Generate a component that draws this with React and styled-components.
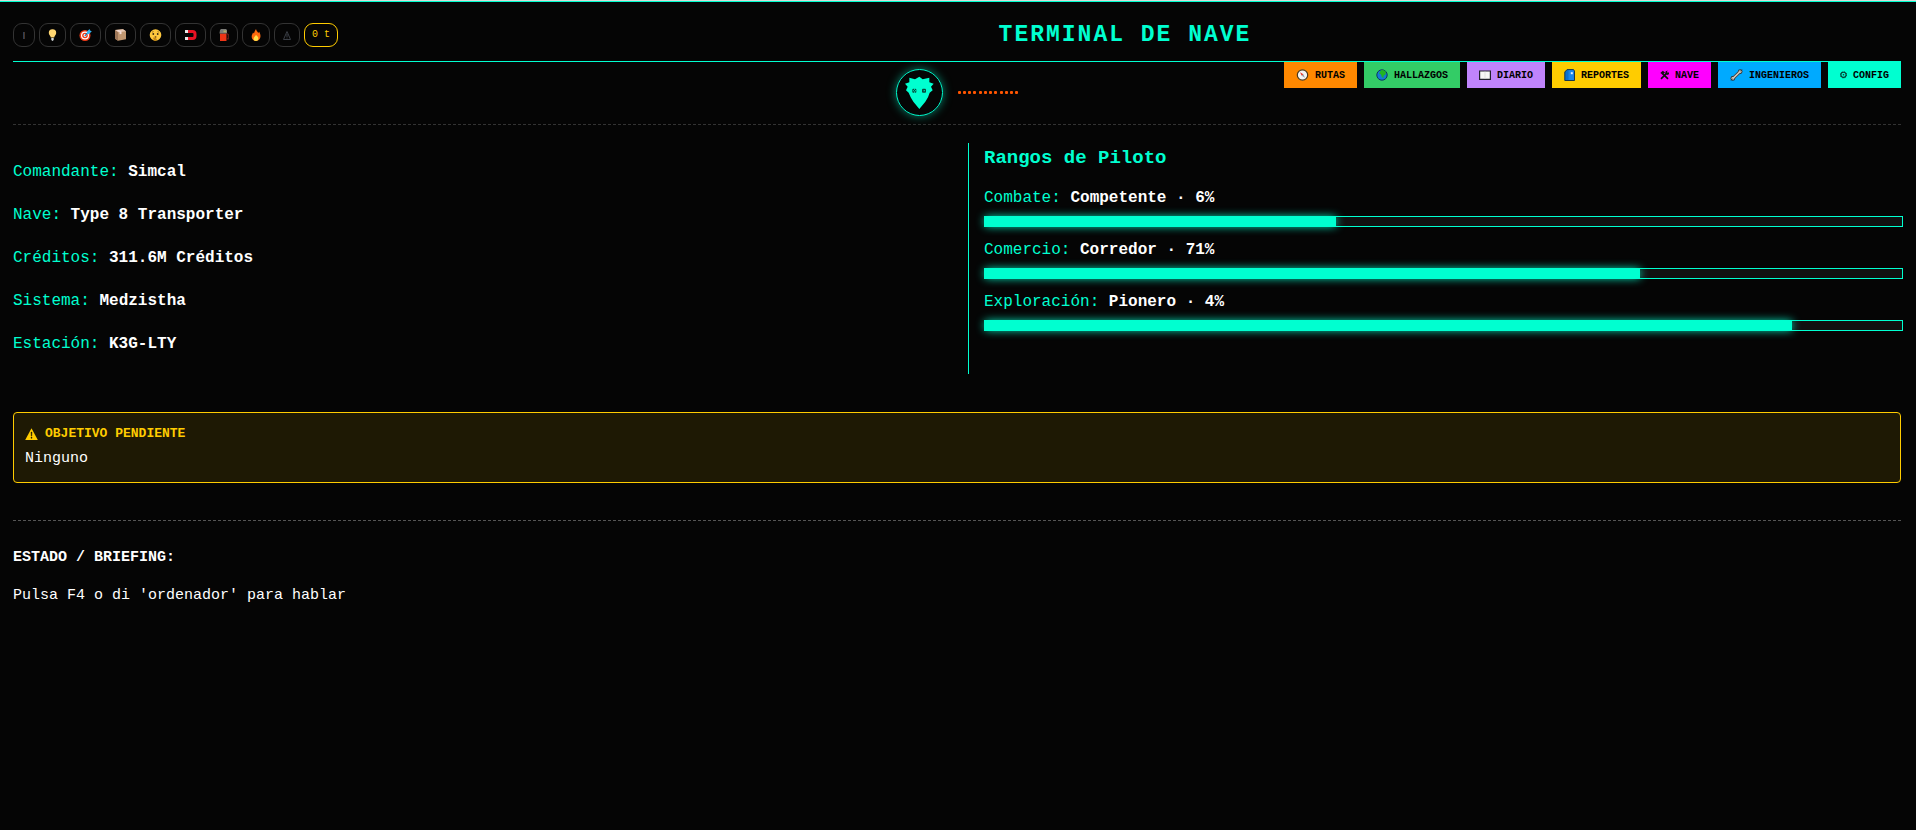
import React, { useState } from 'react'
import styled, { createGlobalStyle } from 'styled-components'

const GlobalStyle = createGlobalStyle`
  * { box-sizing: border-box; }
  body {
    margin: 0;
    min-height: 100vh;
    background: #050505;
    color: #ffffff;
    font-family: "Courier New", "Liberation Mono", monospace;
    font-size: 15px;
    line-height: 20px;
  }
`

/* ---------- icons ---------- */

const Bar = () => (
  <svg width="4" height="12" viewBox="0 0 4 12"><path d="M1.5 3v7" stroke="#2c3d55" /><path d="M2.5 3v7" stroke="#4a3524" /></svg>
)
const Bulb = () => (
  <svg width="9" height="12" viewBox="0 0 9 12">
    <path d="M4.5 .3a3.6 3.6 0 0 1 3.7 3.6c0 1.700-1.700 2.600-2 4.600h-3.400c-.3-2-2-2.900-2-4.600A3.600 3.600 0 0 1 4.500.3z" fill="#ffd671" />
    <path d="M3.300 9h2.400v2l-1.200 1-1.200-1z" fill="#d8dde0" />
  </svg>
)
const Target = () => (
  <svg width="13" height="12" viewBox="0 0 13 12">
    <circle cx="6" cy="6.500" r="5.500" fill="#f03a17" />
    <circle cx="6" cy="6.500" r="4" fill="#fff" />
    <circle cx="6" cy="6.500" r="2.800" fill="#f03a17" />
    <circle cx="6" cy="6.500" r="1.400" fill="#fff" />
    <path d="M5.800 6.800L9 3.500" stroke="#1673b8" strokeWidth="1.200" />
    <path d="M8 2.500L10.500 0l.5 1.600 1.800.6L10 5H8z" fill="#35b5f2" />
  </svg>
)
const Box = () => (
  <svg width="13" height="12" viewBox="0 0 13 12">
    <path d="M1 1L9 .3l3 2v8l-8 1.500-3-2z" fill="#c19770" />
    <path d="M1 1L9 .3l3 2-8 1z" fill="#e8c9b5" />
    <path d="M1 1l3 2.300v8.500l-3-2z" fill="#9d7658" />
    <path d="M4.500 1l3 1.500v2.500l-2 .3V3L2.700 1.300z" fill="#f3dcd6" />
  </svg>
)
const Face = () => (
  <svg width="13" height="12" viewBox="0 0 13 12">
    <circle cx="6.500" cy="6" r="5.800" fill="#ffc83d" />
    <circle cx="4.300" cy="5" r=".9" fill="#3b2a14" />
    <circle cx="8.700" cy="5" r=".9" fill="#3b2a14" />
    <path d="M3 3.200l1.600-.6M8.500 2.600l1.600.6" stroke="#7a5414" strokeWidth=".7" />
    <ellipse cx="6.500" cy="8" rx="1" ry=".8" fill="#5a3510" />
    <path d="M4 8.500l2.500.2 1.500 1.500-.8 1.600H5z" fill="#c68512" />
  </svg>
)
const Magnet = () => (
  <svg width="13" height="12" viewBox="0 0 13 12">
    <path d="M4 2.500h4.500q2.500 0 2.500 2.500v2q0 2.500-2.500 2.500H4" fill="none" stroke="#e81224" strokeWidth="3" />
    <path d="M1 1h3v3H1zM1 8h3v3H1z" fill="#e6e6e6" />
  </svg>
)
const Fuel = () => (
  <svg width="10" height="12" viewBox="0 0 10 12">
    <path d="M1 4.500h6.500V12H1z" fill="#ef3516" />
    <path d="M1 1l1-1h5l1 1v3.500H.5z" fill="#7d7d78" />
    <path d="M4.500 1.500h2.800v1.800H4.500z" fill="#b6ad67" />
    <path d="M7.500 4.500l1.800 1v4.300H7.500" fill="none" stroke="#6c1e18" strokeWidth="1.200" />
  </svg>
)
const Fire = () => (
  <svg width="10" height="12" viewBox="0 0 10 12">
    <path d="M5 0c.3 2 1.700 2.600 2.200 4l1-1.200C9.300 5 9.800 6.500 9.300 8.500 8.800 10.800 7 12 5 12S.9 10.600.7 8.300C.5 6 1.600 5 2 3.500l1 1C3.400 2.500 4.200 1.500 5 0z" fill="#ff6a0d" />
    <path d="M5 6c1.200 1.300 2.600 1.900 2.300 3.800C7.100 11.200 6.200 12 5 12s-2.300-.8-2.400-2.100C2.500 8.300 4.200 7.500 5 6z" fill="#ffe34a" />
  </svg>
)
const WarnOutline = () => (
  <svg width="8" height="12" viewBox="0 0 8 12">
    <path d="M4 2.500L.5 10.500h7z" fill="none" stroke="#3b3f46" />
    <path d="M4 5v3M4 8.500v1" stroke="#3b3f46" />
  </svg>
)
const Warn = () => (
  <svg width="13" height="12" viewBox="0 0 13 12">
    <path d="M6.500.3L12.800 12H.2z" fill="#ffcc00" />
    <path d="M6 4h1l-.2 4h-.6zM6 9h1v1.300H6z" fill="#1f1906" stroke="#1f1906" strokeWidth=".4" />
  </svg>
)
const Compass = () => (
  <svg width="13" height="12" viewBox="0 0 13 12">
    <circle cx="6.500" cy="6" r="5.200" fill="#f4f4f4" stroke="#4d3a1c" strokeWidth="1.200" />
    <path d="M4 3.200L7.300 5.300l-1.500 1.500z" fill="#e52d20" />
    <path d="M9 8.800L7.300 5.300l-1.500 1.500z" fill="#8f9aa5" />
  </svg>
)
const Globe = () => (
  <svg width="12" height="12" viewBox="0 0 12 12">
    <circle cx="6" cy="6" r="5.200" fill="#1479d6" stroke="#0d3a5e" />
    <path d="M5 1.200c2-.4 4 .3 5 2l-.6 2.500-1.700.8-.4 2.800-1.600-1.500L5 5.500 3 4.600z" fill="#22b422" />
  </svg>
)
const Book = () => (
  <svg width="12" height="12" viewBox="0 0 12 12">
    <path d="M.6 2h10.800v8.300H.6z" fill="#f7f7f7" stroke="#22222e" strokeWidth="1.200" />
    <path d="M6 2.600v7" stroke="#dcdcdc" strokeWidth=".8" />
  </svg>
)
const Report = () => (
  <svg width="11" height="12" viewBox="0 0 11 12">
    <path d="M.8 11.500V3L3 .6h6.500l1 1.500v9.400z" fill="#0b71cf" stroke="#17364d" />
    <path d="M4.500 1.300h4.700l.7 1V11H4.500z" fill="#1c86e8" />
    <path d="M6.800 3.200h2v2h-2z" fill="#e7f1fb" />
  </svg>
)
const Tools = () => (
  <svg width="9" height="12" viewBox="0 0 9 12">
    <path d="M1 9.800L7 4M2.300 4.300L8 9.800" stroke="#111" strokeWidth="1.700" />
    <path d="M.3 4l2.500-2.200L5 3.500 2.500 5.500zM5.200 4.500l.5-2.300 2-.7-.8 1.700 1.600.6.500-1v2.400L7 6z" fill="#111" />
  </svg>
)
const Wrench = () => (
  <svg width="13" height="12" viewBox="0 0 13 12">
    <path d="M3 9.300L9.800 2.800" stroke="#34312e" strokeWidth="3" />
    <circle cx="2.800" cy="9.400" r="2.300" fill="#34312e" />
    <circle cx="10.200" cy="2.600" r="2.300" fill="#34312e" />
    <path d="M3 9.300L9.800 2.800" stroke="#cfc8bd" strokeWidth="1.600" />
    <circle cx="2.800" cy="9.400" r="1.400" fill="#cfc8bd" />
    <circle cx="10.200" cy="2.600" r="1.400" fill="#cfc8bd" />
    <path d="M1 11.300l1.500-1.600M10.500 2.300L12 .7" stroke="#34312e" strokeWidth=".9" />
  </svg>
)
const Gear = () => (
  <svg width="7" height="12" viewBox="0 0 7 12">
    <circle cx="3.500" cy="5.800" r="2.600" fill="none" stroke="#053d33" strokeWidth="1.100" />
    <circle cx="3.500" cy="5.800" r="3.100" fill="none" stroke="#053d33" strokeDasharray="1.100 1.330" />
    <circle cx="3.500" cy="5.800" r=".8" fill="#053d33" />
  </svg>
)

const Avatar = () => (
  <svg width="45" height="45" viewBox="51 210 135 135">
    <path
      d="M118 230l10 8 20-5v14l13 4-8 9 5 11-9 7-5 14-8 13-18 22-18-22-8-13-6-14-8-7 5-11-8-9 13-4v-14l17 5z"
      fill="#00ffd0"
    />
    <g fill="#06483c">
      <rect x="97" y="266" width="12" height="12" rx="3" />
      <rect x="126" y="266" width="12" height="12" rx="3" />
    </g>
    <g fill="#00ffd0">
      <path d="M102 265h2v5h-2zM102 274h2v5h-2zM131 270h3v4h-3z" />
      <path d="M99 270h2v4h-2zM105 270h2v4h-2z" />
    </g>
  </svg>
)

/* ---------- data ---------- */

const alerts = [
  { name: 'Estado', icon: <Bar /> },
  { name: 'Luces', icon: <Bulb /> },
  { name: 'Armas', icon: <Target /> },
  { name: 'Carga', icon: <Box /> },
  { name: 'Silencio', icon: <Face /> },
  { name: 'Interdicción', icon: <Magnet /> },
  { name: 'Combustible', icon: <Fuel /> },
  { name: 'Calor', icon: <Fire /> },
  { name: 'Peligro', icon: <WarnOutline /> },
]

const sections = [
  { label: 'RUTAS', color: '#ff8800', icon: <Compass /> },
  { label: 'HALLAZGOS', color: '#33cc66', icon: <Globe /> },
  { label: 'DIARIO', color: '#c084fc', icon: <Book /> },
  { label: 'REPORTES', color: '#ffcc00', icon: <Report /> },
  { label: 'NAVE', color: '#ff00ff', icon: <Tools /> },
  { label: 'INGENIEROS', color: '#00aaff', icon: <Wrench /> },
  { label: 'CONFIG', color: '#00ffd0', icon: <Gear /> },
]

const pilot = [
  ['Comandante', 'Simcal'],
  ['Nave', 'Type 8 Transporter'],
  ['Créditos', '311.6M Créditos'],
  ['Sistema', 'Medzistha'],
  ['Estación', 'K3G-LTY'],
]

const ranks = [
  { name: 'Combate', rank: 'Competente', percent: 6, fill: 38.3 },
  { name: 'Comercio', rank: 'Corredor', percent: 71, fill: 71.4 },
  { name: 'Exploración', rank: 'Pionero', percent: 4, fill: 88 },
]

export default function App() {
  const [section, setSection] = useState('')

  return (
    <>
      <GlobalStyle />
      <Page>
        <Header>
          <Chips>
            {alerts.map((a) => (
              <Chip key={a.name} aria-label={a.name}>{a.icon}</Chip>
            ))}
            <Chip $active>0 t</Chip>
          </Chips>
          <Title>TERMINAL DE NAVE</Title>
        </Header>

        <Toolbar>
          <Voice>
            <AvatarRing><Avatar /></AvatarRing>
            <Wave>
              {[0, 1, 2].map((g) => (
                <WaveGroup key={g}><Dot /><Dot /><Dot /><Dot /></WaveGroup>
              ))}
            </Wave>
          </Voice>
          <Nav>
            {sections.map((s) => (
              <NavButton
                key={s.label}
                type="button"
                $color={s.color}
                aria-pressed={section === s.label}
                onClick={() => setSection(s.label)}
              >
                {s.icon}{s.label}
              </NavButton>
            ))}
          </Nav>
        </Toolbar>

        <Columns>
          <PilotInfo>
            {pilot.map(([label, value]) => (
              <InfoLine key={label}>{label}: <strong>{value}</strong></InfoLine>
            ))}
          </PilotInfo>
          <Ranks>
            <RanksTitle>Rangos de Piloto</RanksTitle>
            {ranks.map((r) => (
              <Rank key={r.name}>
                <RankText>{r.name}: <strong>{r.rank} · {r.percent}%</strong></RankText>
                <Track><Fill style={{ width: `${r.fill}%` }} /></Track>
              </Rank>
            ))}
          </Ranks>
        </Columns>

        <Objective>
          <ObjectiveTitle><Warn />OBJETIVO PENDIENTE</ObjectiveTitle>
          <Text>Ninguno</Text>
        </Objective>

        <Briefing>
          <BriefingTitle>ESTADO / BRIEFING:</BriefingTitle>
          <Text>Pulsa F4 o di 'ordenador' para hablar</Text>
        </Briefing>
      </Page>
    </>
  )
}

const Page = styled.main`
  min-height: 100vh;
  padding: 0 15px 24px 13px;
  border-top: 1px solid #d5ded9;
  box-shadow: inset 0 1px 0 #00ffd0;
`
const Header = styled.header`
  display: flex;
  align-items: center;
  gap: 11px;
  height: 61px;
  padding-top: 8px;
  border-bottom: 1px solid #00ffd0;
`
const Chips = styled.div`
  display: flex;
  gap: 4px;
`
const Chip = styled.span`
  display: flex;
  align-items: center;
  justify-content: center;
  height: 24px;
  padding: 0 ${(p) => (p.$active ? 7 : 8)}px;
  border: 1px solid ${(p) => (p.$active ? '#ffcc00' : '#333333')};
  border-radius: 9px;
  color: #ffcc00;
  font-size: 10px;
`
const Title = styled.h1`
  flex: 1;
  margin: 0;
  text-align: center;
  color: #00ffd0;
  font-size: 23px;
  line-height: 28px;
  letter-spacing: 2px;
`
const Toolbar = styled.div`
  display: grid;
  grid-template-columns: 1fr auto 1fr;
  border-bottom: 1px dashed #333333;
`
const Voice = styled.div`
  grid-column: 2;
  display: flex;
  align-items: center;
  gap: 15px;
  padding: 7px 0 8px;
`
const AvatarRing = styled.div`
  display: flex;
  width: 47px;
  height: 47px;
  border: 1px solid #00ffd0;
  border-radius: 50%;
  box-shadow: 0 0 10px rgba(0, 255, 208, 0.5);
`
const Wave = styled.div`
  display: flex;
  gap: 3px;
`
const WaveGroup = styled.div`
  display: flex;
  gap: 2px;
`
const Dot = styled.span`
  width: 3px;
  height: 3px;
  border-radius: 1px;
  background: #ff5500;
`
const Nav = styled.nav`
  display: flex;
  align-items: flex-start;
  justify-content: flex-end;
  gap: 7px;
`
const NavButton = styled.button`
  display: flex;
  align-items: center;
  gap: 6px;
  height: 26px;
  padding: 0 12px;
  border: none;
  background: ${(p) => p.$color};
  color: #000000;
  font-family: inherit;
  font-size: 10px;
  font-weight: 700;
  cursor: pointer;
`
const Columns = styled.section`
  display: grid;
  grid-template-columns: 1fr 1fr;
  gap: 22px;
  margin-top: 18px;
`
const PilotInfo = styled.div`
  padding: 8px 0;
`
const InfoLine = styled.p`
  margin: 0;
  color: #00ffd0;
  font-size: 16px;
  line-height: 43px;

  strong {
    color: #ffffff;
  }
`
const Ranks = styled.div`
  padding-left: 15px;
  border-left: 1px solid #00ffd0;
`
const RanksTitle = styled.h3`
  margin: 0 0 14px;
  color: #00ffd0;
  font-size: 19px;
  line-height: 30px;
`
const Rank = styled.div`
  margin-bottom: 12px;
`
const RankText = styled.p`
  margin: 0 0 7px;
  color: #00ffd0;
  font-size: 16px;
  line-height: 22px;

  strong {
    color: #ffffff;
  }
`
const Track = styled.div`
  box-sizing: content-box;
  width: 100%;
  height: 9px;
  border: 1px solid #00ffd0;
  background: #111111;
`
const Fill = styled.div`
  height: 100%;
  background: #00ffd0;
  box-shadow: 0 0 10px #00ffd0;
`
const Objective = styled.section`
  margin-top: 38px;
  padding: 11px 11px 13px;
  border: 1px solid #ffcc00;
  border-radius: 4px;
  background: rgba(255, 204, 0, 0.1);
`
const ObjectiveTitle = styled.h4`
  display: flex;
  align-items: center;
  gap: 7px;
  margin: 0 0 5px;
  color: #ffcc00;
  font-size: 13px;
  line-height: 20px;
`
const Text = styled.p`
  margin: 0;
`
const Briefing = styled.section`
  margin-top: 37px;
  padding-top: 27px;
  border-top: 1px dashed #555555;
`
const BriefingTitle = styled.h4`
  margin: 0 0 18px;
  font-size: 15px;
`
